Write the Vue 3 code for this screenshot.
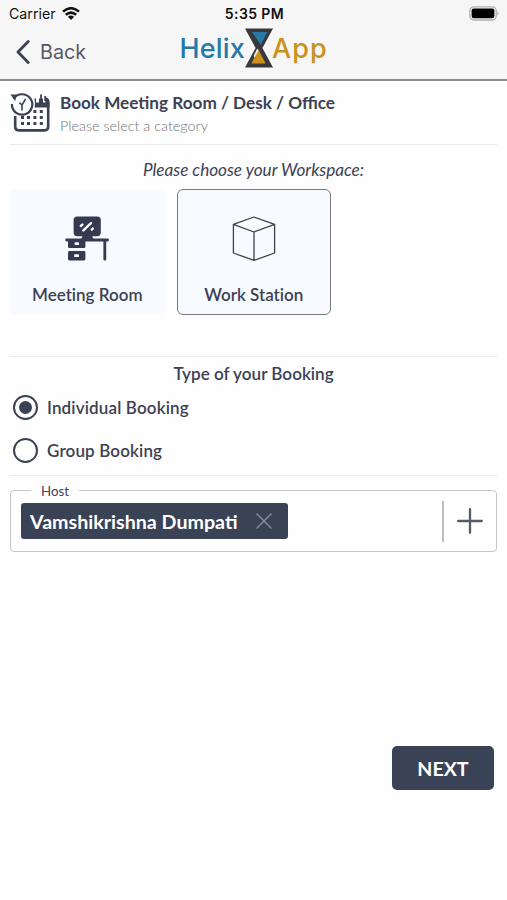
<template>
  <div class="booking-page">
    <header class="app-header">
      <div class="status-bar">
        <div class="carrier">
          <span class="carrier-name">Carrier</span>
          <svg class="wifi" viewBox="0 0 18 13">
            <path d="M1 4.6 Q9 -2.2 17 4.6" />
            <path d="M3.8 7.8 Q9 3.4 14.2 7.8" />
            <path class="wifi-dot" d="M9 13 L5.9 9.8 Q9 7.4 12.1 9.8 Z" />
          </svg>
        </div>
        <span class="time">5:35 PM</span>
        <svg class="battery" viewBox="0 0 31 15">
          <rect class="battery-shell" x="0.8" y="0.8" width="26.4" height="13.2" rx="4" />
          <rect x="2.6" y="2.6" width="22.8" height="9.6" rx="2.2" />
          <path class="battery-tip" d="M28.4 5 Q30.6 7.4 28.4 9.8 Z" />
        </svg>
      </div>

      <div class="nav-bar">
        <button class="back-button">
          <svg class="chevron" viewBox="0 0 14 24">
            <path d="M12.2 1.6 L2 12 L12.2 22.4" />
          </svg>
          <span>Back</span>
        </button>
        <div class="logo">
          <span class="logo-helix">Helix</span>
          <svg class="hourglass" viewBox="0 0 28 40">
            <path class="glass" d="M0 0.6 H28 L17.4 20 L28 39.4 H0 L10.6 20 Z" />
            <path class="blue" d="M7 4 H22.4 L15.8 17 Z" />
            <path class="gold" d="M13.4 21.6 L20.6 35.4 H6.4 Z" />
            <path class="cream" d="M12.2 20.6 L13.6 22.4 L9.6 29.6 L8.6 28 Z" />
          </svg>
          <span class="logo-app">App</span>
        </div>
      </div>
    </header>

    <main class="content">
      <section class="page-heading">
        <svg class="calendar-icon" viewBox="0 0 40 41">
          <path class="line" d="M5.2 24 V34.5 Q5.2 38.4 8.8 38.4 H34.6 Q38.2 38.4 38.2 34.6 V10" />
          <path class="fill" d="M24.4 6.6 H26 V10.4 H29 V6.4 H33 V10.4 H35.4 V5.6 Q39.5 6 39.5 9.4 V15.6 H24.6 Q25.4 11 24.4 6.6 Z" />
          <path class="pin" d="M31 2.4 V8.4 M35.2 4 V9" />
          <path class="clock" d="M3.6 6.8 A10.2 10.2 0 1 1 1.9 12" />
          <path class="fill" d="M0.4 2.6 L6.8 2.6 L5.2 9 Z" />
          <path class="hand" d="M12 13.2 L15.6 6.8 M12 12.6 V18.4 M9.4 10.6 L12 13" />
          <rect v-for="dot in dots" :key="dot.id" class="fill" :x="dot.x" :y="dot.y" width="3" height="3" />
        </svg>
        <div class="heading-text">
          <h1>Book Meeting Room / Desk / Office</h1>
          <p>Please select a category</p>
        </div>
      </section>

      <section class="workspace">
        <h2 class="workspace-title">Please choose your Workspace:</h2>
        <div class="cards">
          <button class="card" :class="{ selected: workspace === 'room' }" @click="workspace = 'room'">
            <svg class="card-icon" viewBox="0 0 44 46">
              <rect x="8.6" y="0.4" width="27.2" height="19.8" rx="3.6" />
              <path d="M18 19 H26.6 L28.4 23 H16.2 Z" />
              <rect x="0.4" y="22.6" width="43.4" height="2.8" rx="0.8" />
              <path d="M3 25 H20.4 V30.4 Q20.4 32 19 32 H4.6 Q3 32 3 30.4 Z" />
              <rect x="3" y="35" width="17.4" height="9.4" rx="1.4" />
              <rect x="38.4" y="24" width="2.8" height="20.4" rx="1" />
              <rect class="hole" x="9.6" y="26.2" width="4.4" height="2.8" rx="0.6" />
              <rect class="hole" x="9.2" y="38.2" width="4.8" height="2.8" rx="0.6" />
              <path class="shine" d="M18.4 14.4 L26 7.2 M15.8 10 L17.4 8.6 M26.8 13.6 L27.8 12.6" />
            </svg>
            <span>Meeting Room</span>
          </button>
          <button class="card" :class="{ selected: workspace === 'station' }" @click="workspace = 'station'">
            <svg class="card-icon cube" viewBox="0 0 44 46">
              <path d="M22 1 L42.6 8.4 V37 L22 44.4 L1.4 37 V8.4 Z M1.4 8.4 L22 16 L42.6 8.4 M22 16 V44.4" />
            </svg>
            <span>Work Station</span>
          </button>
        </div>
      </section>

      <section class="booking-type">
        <h2>Type of your Booking</h2>
        <label v-for="option in bookingTypes" :key="option.value" class="radio-row">
          <input v-model="bookingType" type="radio" name="booking" :value="option.value" />
          <span class="radio"></span>
          <span class="radio-label">{{ option.label }}</span>
        </label>
      </section>

      <section class="host-field">
        <span class="host-legend">Host</span>
        <div class="host-chip">
          <span>Vamshikrishna Dumpati</span>
          <svg class="remove" viewBox="0 0 18 18">
            <path d="M1.5 1.5 L16.5 16.5 M16.5 1.5 L1.5 16.5" />
          </svg>
        </div>
        <button class="add-host">
          <svg viewBox="0 0 26 26">
            <path d="M13 1.2 V24.8 M1.2 13 H24.8" />
          </svg>
        </button>
      </section>

      <button class="next-button">NEXT</button>
    </main>
  </div>
</template>

<script setup>
import { ref } from 'vue';

const workspace = ref('station');
const bookingType = ref('individual');

const bookingTypes = [
  { value: 'individual', label: 'Individual Booking' },
  { value: 'group', label: 'Group Booking' }
];

// dots of the calendar icon, the first row is partly hidden by the clock
const dots = [
  [23.4, 18], [29.8, 18],
  [11, 24], [17, 24], [23.4, 24], [29.8, 24],
  [11, 30], [17, 30], [23.4, 30], [29.8, 30]
].map(([x, y], id) => ({ id, x, y }));
</script>

<style>
body {
  background: #fefefe;
}
</style>

<style scoped>
.booking-page {
  height: 900px;
  font-family: Lato, sans-serif;
  color: #3c4153;
}

.booking-page * {
  box-sizing: border-box;
}

button {
  padding: 0;
  border: none;
  background: none;
  font-family: inherit;
  color: inherit;
}

h1,
h2,
p {
  margin: 0;
}

svg {
  display: block;
  flex: none;
}

.app-header {
  height: 81px;
  background: #f6f6f6;
  border-bottom: 2px solid #8b8b8e;
}

.status-bar {
  display: grid;
  grid-template-columns: 1fr auto 1fr;
  align-items: center;
  height: 27px;
  padding: 0 7px 0 9px;
  font-family: Inter, sans-serif;
  color: #111;
}

.carrier {
  display: flex;
  align-items: center;
  gap: 6px;
}

.carrier-name {
  font-size: 14.2px;
}

.wifi {
  width: 18px;
  height: 13px;
  fill: none;
  stroke: #111;
  stroke-width: 2.5;
}

.wifi-dot {
  fill: #111;
  stroke: none;
}

.time {
  font-size: 14px;
  font-weight: 600;
  letter-spacing: 0.4px;
}

.battery {
  justify-self: end;
  width: 31px;
  height: 15px;
  fill: #000;
}

.battery-shell {
  fill: none;
  stroke: #b0b0b0;
  stroke-width: 1.3;
}

.battery-tip {
  fill: #aaa;
}

.nav-bar {
  display: grid;
  grid-template-columns: 1fr auto 1fr;
  height: 52px;
}

.back-button {
  display: flex;
  align-items: center;
  justify-self: start;
  gap: 10px;
  height: 50px;
  padding-left: 16px;
  font-family: Inter, sans-serif;
  font-size: 19.8px;
  color: #55586a;
}

.chevron {
  width: 14px;
  height: 24px;
  fill: none;
  stroke: #3c4153;
  stroke-width: 2.8;
  stroke-linecap: round;
  stroke-linejoin: round;
}

.logo {
  display: flex;
  align-items: center;
  height: 40px;
  margin-top: 1px;
  font-family: Inter, sans-serif;
  font-size: 27px;
  font-weight: 500;
}

.logo-helix {
  color: #2679a6;
  letter-spacing: 0.2px;
}

.logo-app {
  color: #c8921d;
  letter-spacing: 1px;
  margin-left: -1px;
}

.hourglass {
  width: 28px;
  height: 40px;
}

.glass {
  fill: #36383b;
}

.blue {
  fill: #2878a5;
}

.gold {
  fill: #cb911b;
}

.cream {
  fill: #f1eee8;
}

.content {
  display: flex;
  flex-direction: column;
  padding: 0 10px;
}

.page-heading {
  display: flex;
  gap: 10px;
  height: 64px;
  padding-top: 11px;
  border-bottom: 1px solid #e9e9eb;
}

.calendar-icon {
  width: 40px;
  height: 41px;
}

.calendar-icon .fill {
  fill: #3c4153;
}

.calendar-icon .line,
.calendar-icon .clock,
.calendar-icon .hand,
.calendar-icon .pin {
  fill: none;
  stroke: #3c4153;
  stroke-width: 2.6;
}

.calendar-icon .clock {
  stroke-width: 2.2;
}

.calendar-icon .hand {
  stroke-width: 1.6;
}

.calendar-icon .pin {
  stroke-width: 1.8;
}

.heading-text h1 {
  font-size: 17.15px;
  font-weight: 700;
  line-height: 22px;
}

.heading-text p {
  font-size: 14.4px;
  line-height: 23px;
  font-weight: 300;
  color: #707177;
}

.workspace {
  height: 212px;
  padding-top: 14px;
  border-bottom: 1px solid #ececee;
}

.workspace-title {
  font-size: 17.15px;
  font-style: italic;
  font-weight: 400;
  line-height: 22px;
  text-align: center;
}

.cards {
  display: flex;
  gap: 12px;
  margin-top: 8px;
}

.card {
  display: flex;
  flex-direction: column;
  align-items: center;
  width: 154.5px;
  height: 126px;
  padding-top: 26px;
  border: 1px solid transparent;
  border-radius: 6px;
  background: #f7fbff;
  font-size: 17px;
  font-weight: 600;
  font-variant-ligatures: none;
  line-height: 22px;
}

.card.selected {
  border-color: #77797d;
}

.card-icon {
  width: 44px;
  height: 46px;
  margin-bottom: 22px;
  fill: #343a50;
}

.card-icon .hole {
  fill: #f7fbff;
}

.card-icon .shine {
  fill: none;
  stroke: #f7fbff;
  stroke-width: 2.4;
  stroke-linecap: round;
}

.card-icon.cube {
  fill: none;
  stroke: #3f4148;
  stroke-width: 1.3;
  stroke-linejoin: round;
}

.booking-type {
  height: 119px;
  padding-top: 6px;
  border-bottom: 1px solid #ececee;
}

.booking-type h2 {
  font-size: 17.1px;
  font-weight: 600;
  line-height: 22px;
  text-align: center;
}

.radio-row {
  display: flex;
  align-items: center;
  gap: 9px;
  height: 43px;
  padding-left: 3px;
}

.booking-type h2 + .radio-row {
  margin-top: 1px;
}

.radio-row input {
  display: none;
}

.radio {
  display: flex;
  align-items: center;
  justify-content: center;
  width: 25px;
  height: 25px;
  border: 2px solid #3c4153;
  border-radius: 50%;
}

input:checked + .radio::after {
  content: '';
  width: 13px;
  height: 13px;
  border-radius: 50%;
  background: #3c4153;
}

.radio-label {
  font-size: 17px;
  font-weight: 600;
  letter-spacing: 0.15px;
}

.host-field {
  position: relative;
  display: flex;
  align-items: center;
  justify-content: space-between;
  height: 62px;
  margin-top: 14px;
  padding: 0 0 0 10px;
  border: 1px solid #c6c8c8;
  border-radius: 4px;
}

/* label sitting on the top border */
.host-legend {
  position: absolute;
  top: -9px;
  left: 20px;
  padding: 0 10px;
  background: #fefefe;
  font-size: 13.3px;
  line-height: 18px;
}

.host-chip {
  display: flex;
  align-items: center;
  justify-content: space-between;
  width: 267px;
  height: 36px;
  padding: 0 15px 0 9px;
  border-radius: 3px;
  background: #3a4256;
  color: #fff;
  font-size: 19.65px;
  font-weight: 700;
}

.remove {
  width: 18px;
  height: 18px;
  fill: none;
  stroke: #8b909c;
  stroke-width: 1.4;
}

.add-host {
  display: flex;
  align-items: center;
  justify-content: center;
  width: 54px;
  height: 41px;
  border-left: 2px solid #bcbfc1;
}

.add-host svg {
  width: 26px;
  height: 26px;
  fill: none;
  stroke: #555b69;
  stroke-width: 2.3;
  stroke-linecap: round;
}

.next-button {
  align-self: flex-end;
  width: 102px;
  height: 44px;
  margin: 194px 3px 0 0;
  border-radius: 5px;
  background: #3a4256;
  color: #fff;
  font-size: 19.6px;
  font-weight: 700;
}
</style>
